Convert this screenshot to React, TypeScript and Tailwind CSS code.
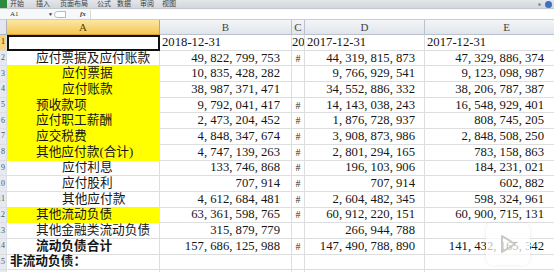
const font = { fontFamily: '"Liberation Serif", "Noto Sans CJK SC", serif' };

type Row = {
  a: string;
  b: string;
  c: string;
  d: string;
  e: string;
  indent?: 0 | 1 | 2 | 3;
  yellow?: boolean;
  bold?: boolean;
};

const rows: Row[] = [
  { a: "应付票据及应付账款", b: "49, 822, 799, 753", c: "#", d: "44, 319, 815, 873", e: "47, 329, 886, 374", indent: 1 },
  { a: "应付票据", b: "10, 835, 428, 282", c: "", d: "9, 766, 929, 541", e: "9, 123, 098, 987", indent: 2, yellow: true },
  { a: "应付账款", b: "38, 987, 371, 471", c: "", d: "34, 552, 886, 332", e: "38, 206, 787, 387", indent: 2, yellow: true },
  { a: "预收款项", b: "9, 792, 041, 417", c: "#", d: "14, 143, 038, 243", e: "16, 548, 929, 401", indent: 1, yellow: true },
  { a: "应付职工薪酬", b: "2, 473, 204, 452", c: "#", d: "1, 876, 728, 937", e: "808, 745, 205", indent: 1, yellow: true },
  { a: "应交税费", b: "4, 848, 347, 674", c: "#", d: "3, 908, 873, 986", e: "2, 848, 508, 250", indent: 1, yellow: true },
  { a: "其他应付款(合计)", b: "4, 747, 139, 263", c: "#", d: "2, 801, 294, 165", e: "783, 158, 863", indent: 1, yellow: true },
  { a: "应付利息", b: "133, 746, 868", c: "#", d: "196, 103, 906", e: "184, 231, 021", indent: 2 },
  { a: "应付股利", b: "707, 914", c: "#", d: "707, 914", e: "602, 882", indent: 2 },
  { a: "其他应付款", b: "4, 612, 684, 481", c: "#", d: "2, 604, 482, 345", e: "598, 324, 961", indent: 2 },
  { a: "其他流动负债", b: "63, 361, 598, 765", c: "#", d: "60, 912, 220, 151", e: "60, 900, 715, 131", indent: 1, yellow: true },
  { a: "其他金融类流动负债", b: "315, 879, 779", c: "", d: "266, 944, 788", e: "", indent: 1 },
  { a: "流动负债合计", b: "157, 686, 125, 988", c: "#", d: "147, 490, 788, 890", e: "141, 432, 165, 342", indent: 1, bold: true },
  { a: "非流动负债：", b: "", c: "", d: "", e: "", indent: 0, bold: true },
  { a: "", b: "", c: "", d: "", e: "" },
];

const tabs = [
  { t: "开始", w: "w-[26px]" },
  { t: "插入", w: "w-[24px]" },
  { t: "页面布局", w: "w-[37px]" },
  { t: "公式", w: "w-[20px]" },
  { t: "数据", w: "w-[23px]" },
  { t: "审阅", w: "w-[22px]" },
  { t: "视图", w: "w-[20px]" },
];

const cols = "grid grid-cols-[7px_153px_132px_13px_120px_164px]";
const cell = "h-[15.7px] border-r border-b border-[#dcdee0] flex items-center overflow-hidden whitespace-nowrap";

const indentCls = ["pl-[3px]", "pl-[29px]", "pl-[55px]", "pl-[3px]"];

export default function App() {
  return (
    <div className="relative w-[554px] h-[272px] overflow-hidden bg-white text-[#161616]" style={font}>
      {/* ribbon tabs */}
      <div className="flex h-[9px] bg-gradient-to-b from-[#e3e6ea] to-[#d3d7dd] border-b border-[#c4c9d0]">
        <div className="w-[7px] bg-[#2e8b3d]" />
        <div className="flex pl-[3px] text-[7px] leading-[8px] text-[#3b3f45]">
          {tabs.map((x) => (
            <span key={x.t} className={x.w}>
              {x.t}
            </span>
          ))}
        </div>
        <div className="ml-auto flex items-center gap-[4px] pr-[2px]">
          <span className="w-[3px] h-[3px] rounded-full bg-[#8f959c]" />
          <span className="w-[7px] h-[7px] rounded-full bg-[#3d6fc4]" />
        </div>
      </div>

      {/* formula bar */}
      <div className="flex items-center h-[11px] bg-[#f7f8fa] border-b border-[#c9ced5] text-[7px] leading-none text-[#333]">
        <span className="pl-[10px] w-[48px]">A1</span>
        <span className="text-[5px] w-[6px]">▼</span>
        <span className="w-[12px] h-[7px] rounded-l-full border border-[#b5bac1] bg-white" />
        <span className="ml-[14px] italic font-bold text-[7px]">fx</span>
        <div className="ml-[4px] flex-1 h-[9px] bg-white border-l border-[#d6d9de]" />
      </div>

      {/* column headers */}
      <div className={cols}>
        <div className="h-[15px] bg-[#e4e8ee] border-r border-b border-[#a9b4c2]" />
        {["A", "B", "C", "D", "E"].map((c) => (
          <div
            key={c}
            className={
              "h-[15px] border-r border-b flex items-center justify-center text-[11px] " +
              (c === "A"
                ? "bg-gradient-to-b from-[#fce7a4] to-[#f5c650] border-[#d9a33c] text-[#5a4300]"
                : "bg-gradient-to-b from-[#f3f5f8] to-[#e1e5eb] border-[#b9c1cc] text-[#444]")
            }
          >
            {c}
          </div>
        ))}
      </div>

      {/* row 1 */}
      <div className={cols + " text-[12.7px]"}>
        <div className={cell + " bg-[#f7d67c] border-[#d9a33c] justify-end text-[8px] pr-[1px]"}>1</div>
        <div className="h-[15.7px] border-2 border-[#111]" />
        <div className={cell + " pl-[2px]"}>2018-12-31</div>
        <div className={cell}>20</div>
        <div className={cell + " pl-[2px]"}>2017-12-31</div>
        <div className={cell + " pl-[2px]"}>2017-12-31</div>
      </div>

      {rows.map((r, i) => (
        <div key={i} className={cols + " text-[12.7px]"}>
          <div className={cell + " bg-[#e6eaf0] border-[#b9c1cc] justify-end text-[8px] pr-[1px] text-[#555]"}>{i + 2}</div>
          <div
            className={
              cell +
              " " +
              indentCls[r.indent ?? 0] +
              (r.yellow ? " bg-[#ffff00] border-[#ffff00]" : "") +
              (r.bold ? " font-bold" : "") +
              (r.indent === 0 ? " overflow-visible" : "")
            }
          >
            {r.a}
          </div>
          <div className={cell + " justify-end pr-[11px]"}>{r.b}</div>
          <div className={cell + " justify-center text-[10px] text-[#333]"}>{r.c}</div>
          <div className={cell + " justify-end pr-[9px]"}>{r.d}</div>
          <div className={cell + " justify-end pr-[44px]"}>{r.e}</div>
        </div>
      ))}

      {/* video play overlay */}
      <div className="absolute left-[486px] top-[223px] w-[44px] h-[42px] rounded-[8px] bg-white/70 border border-white/80 shadow-[0_0_4px_rgba(0,0,0,0.08)] flex items-center justify-center">
        <svg width="20" height="22" viewBox="0 0 20 22" fill="none">
          <path d="M4 3 L17 11 L4 19 Z" stroke="#c8c8c8" strokeWidth="2" strokeLinejoin="round" fill="none" />
        </svg>
      </div>
    </div>
  );
}
